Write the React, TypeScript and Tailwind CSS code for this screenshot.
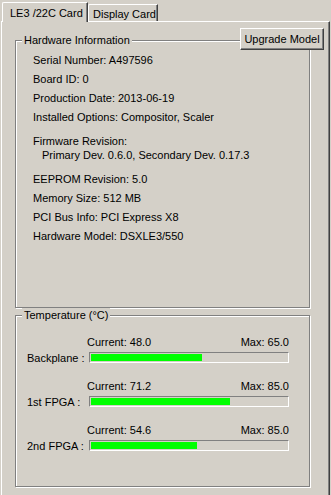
const font = { fontFamily: '"Liberation Sans", Arial, sans-serif' };

const etched = "border border-[#808080] shadow-[inset_1px_1px_0_#ffffff,1px_1px_0_#ffffff]";

function GroupBox({ title, className, children }: { title: string; className: string; children: React.ReactNode }) {
  return (
    <div className={`relative ${etched} ${className}`}>
      <span className="absolute -top-[8px] left-[6px] bg-[#d4d0c8] px-[2px] text-[11px] leading-[14px]">{title}</span>
      {children}
    </div>
  );
}

const temps = [
  { label: "Backplane :", current: "48.0", max: "65.0", fill: 111 },
  { label: "1st FPGA :", current: "71.2", max: "85.0", fill: 139 },
  { label: "2nd FPGA :", current: "54.6", max: "85.0", fill: 106 },
];

export default function App() {
  return (
    <div className="w-[331px] h-[495px] overflow-hidden bg-[#d4d0c8] pt-[2px] text-black text-[11px] leading-[14px]" style={font}>
      {/* tabs */}
      <div className="relative z-10 flex h-[19px] items-start pl-[2px]">
        <div className="h-[20px] w-[86px] rounded-tl-[2px] border-l border-t border-white border-r border-r-[#404040] bg-[#d4d0c8] pl-[7px] pt-[3px] shadow-[inset_-1px_0_0_#808080]">
          LE3 /22C Card
        </div>
        <div className="mt-[2px] h-[17px] w-[70px] rounded-tl-[2px] border-l border-t border-white border-r border-r-[#404040] pl-[4px] pt-[2px] shadow-[inset_-1px_0_0_#808080]">
          Display Card
        </div>
      </div>

      {/* panel */}
      <div className="relative ml-[1px] h-[480px] w-[329px] border-l border-t border-white border-r border-r-[#404040] shadow-[inset_-1px_0_0_#808080] pl-[13px] pt-[18px]">
        <button className="absolute right-[5px] top-[6px] z-10 h-[22px] w-[84px] border border-t-white border-l-white border-r-[#404040] border-b-[#404040] bg-[#d4d0c8] text-[11px] leading-[14px] shadow-[inset_-1px_-1px_0_#808080]">
          Upgrade Model
        </button>

        <GroupBox title="Hardware Information" className="h-[268px] w-[295px] pl-[17px] pt-[12px]">
          <div className="flex flex-col gap-[5px]">
            <div>Serial Number: A497596</div>
            <div>Board ID: 0</div>
            <div>Production Date: 2013-06-19</div>
            <div>Installed Options: Compositor, Scaler</div>
            <div className="my-[5px] flex flex-col">
              <div>Firmware Revision:</div>
              <div className="pl-[9px]">Primary Dev. 0.6.0, Secondary Dev. 0.17.3</div>
            </div>
            <div>EEPROM Revision: 5.0</div>
            <div>Memory Size: 512 MB</div>
            <div>PCI Bus Info: PCI Express X8</div>
            <div>Hardware Model: DSXLE3/550</div>
          </div>
        </GroupBox>

        <GroupBox title="Temperature (°C)" className="mt-[7px] h-[172px] w-[295px] pl-[11px] pt-[19px]">
          <div className="flex flex-col gap-[14px]">
            {temps.map((t) => (
              <div key={t.label} className="flex">
                <div className="w-[60px] pt-[16px]">{t.label}</div>
                <div className="flex w-[202px] flex-col">
                  <div className="flex justify-between">
                    <span>Current: {t.current}</span>
                    <span>Max: {t.max}</span>
                  </div>
                  <div className="ml-[2px] mt-[3px] h-[11px] w-[200px] border border-t-[#808080] border-l-[#808080] border-r-white border-b-white p-[1px]">
                    <div className="h-[7px] bg-[#00ff00]" style={{ width: t.fill }} />
                  </div>
                </div>
              </div>
            ))}
          </div>
        </GroupBox>
      </div>
    </div>
  );
}
